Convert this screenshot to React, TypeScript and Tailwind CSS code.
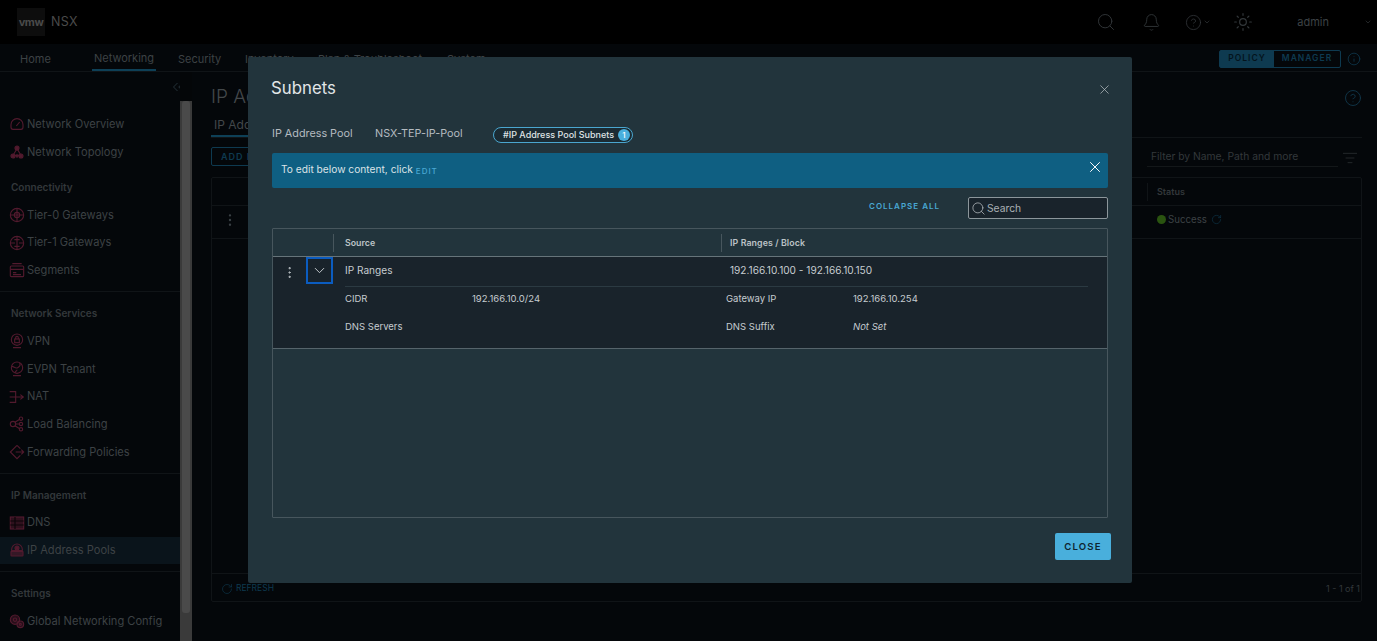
import React from "react";
import { Search, Bell, CircleHelp, Sun, ChevronDown, ChevronsLeft, EllipsisVertical, X, RotateCw, Info, ListFilter } from "lucide-react";

const font = "font-['Inter','Noto_Sans',sans-serif]";

function Ico({ children }: { children: React.ReactNode }) {
  return (
    <svg viewBox="0 0 24 24" fill="none" stroke="currentColor" strokeWidth="1.7" className="w-[16px] h-[16px] text-[#521a2e] shrink-0">
      {children}
    </svg>
  );
}

const icons: Record<string, React.ReactNode> = {
  overview: <><path d="M6 20h12a3 3 0 0 0 3-3v-4a9 9 0 0 0-18 0v4a3 3 0 0 0 3 3z" /><path d="M11 15l5-6" /></>,
  topology: <><path d="M12 7L6 17h12z" /><circle cx="12" cy="6" r="3" fill="currentColor" /><circle cx="6" cy="18" r="3" fill="currentColor" /><circle cx="18" cy="18" r="3" fill="currentColor" /><circle cx="12" cy="18" r="1.6" fill="currentColor" /></>,
  t0: <><circle cx="12" cy="12" r="10" /><path d="M2 12h20M12 2v20" /><circle cx="12" cy="12" r="4" /></>,
  t1: <><circle cx="12" cy="12" r="10" /><path d="M2 12h7M15 12h7M12 2v20" /><path d="M8 7h8M8 17h8" /></>,
  segments: <><rect x="2" y="6" width="20" height="16" rx="1.5" /><path d="M5 2.5h14M2 11h20M6 16h5M6 19h12" /></>,
  vpn: <><circle cx="12" cy="10" r="8.5" /><rect x="8.5" y="9" width="7" height="5.5" /><path d="M10 9V7a2 2 0 0 1 4 0v2M6 22h12" /></>,
  evpn: <><circle cx="12" cy="10" r="8.5" /><path d="M4 8c4 0 5 4 9 2s4-5 3-7M9 18c0-3 3-3 3-5M6 22h12" /></>,
  nat: <><path d="M1 4h9v16H1M1 12h20M17 8.5l4.5 3.5-4.5 3.5" /></>,
  lb: <><circle cx="6" cy="12" r="4" /><circle cx="18" cy="4" r="2.5" /><circle cx="18" cy="12" r="2.5" /><circle cx="18" cy="20" r="2.5" /><path d="M10 12h5.5M9 9.5l7-4.5M9 14.5l7 4.5" /></>,
  forward: <><path d="M12 2L2 12l10 10 5-5M17 7l-5-5" /><path d="M10 12h12M18.5 8.5l3.5 3.5-3.5 3.5" /></>,
  dns: <><rect x="2" y="3" width="20" height="18" fill="currentColor" fillOpacity="0.55" /><path d="M2 9h20M2 15h20M9 3v18" stroke="#0a0508" /></>,
  pools: <><path d="M4 11a8 8 0 0 1 16 0v2H4z" /><circle cx="12" cy="9" r="3" fill="currentColor" /><rect x="3" y="14" width="18" height="7" rx="1" fill="currentColor" fillOpacity="0.6" /></>,
  settings: <><circle cx="9" cy="10" r="7" fill="currentColor" fillOpacity="0.45" /><circle cx="9" cy="10" r="2.5" /><circle cx="17" cy="17" r="5" fill="currentColor" fillOpacity="0.45" /><circle cx="17" cy="17" r="1.5" /></>,
};

function NavItem({ k, label, active }: { k: string; label: string; active?: boolean }) {
  return (
    <div className={`h-[27.67px] flex items-center gap-[2px] pl-[9px] text-[11.1px] text-[#3d4245] ${active ? "bg-[#0a141b]" : ""}`}>
      <Ico>{icons[k]}</Ico>
      <span className="whitespace-nowrap">{label}</span>
    </div>
  );
}

function Heading({ label }: { label: string }) {
  return <div className="h-[35.3px] pt-[15px] pl-[11px] text-[10px] leading-[13px] font-semibold text-[#33383b]">{label}</div>;
}

function Divider() {
  return <div className="h-[8px] border-b border-[#101417]" />;
}

function Sidebar() {
  return (
    <div className="w-[192px] shrink-0 flex h-full">
      <div className="w-[180px] flex flex-col">
        <div className="h-[29px] flex justify-end items-center">
          <ChevronsLeft className="w-[18px] h-[18px] text-[#2f4048] mr-[-7px]" strokeWidth={1} />
        </div>
        <div className="h-[9.5px]" />
        <NavItem k="overview" label="Network Overview" />
        <NavItem k="topology" label="Network Topology" />
        <Heading label="Connectivity" />
        <NavItem k="t0" label="Tier-0 Gateways" />
        <NavItem k="t1" label="Tier-1 Gateways" />
        <NavItem k="segments" label="Segments" />
        <Divider />
        <Heading label="Network Services" />
        <NavItem k="vpn" label="VPN" />
        <NavItem k="evpn" label="EVPN Tenant" />
        <NavItem k="nat" label="NAT" />
        <NavItem k="lb" label="Load Balancing" />
        <NavItem k="forward" label="Forwarding Policies" />
        <Divider />
        <Heading label="IP Management" />
        <NavItem k="dns" label="DNS" />
        <NavItem k="pools" label="IP Address Pools" active />
        <Divider />
        <Heading label="Settings" />
        <NavItem k="settings" label="Global Networking Config" />
      </div>
      <div className="w-[12px] flex flex-col bg-[#040608] pt-[29px]">
        <div className="flex-1 bg-[#3a3a3a] flex justify-center">
          <div className="w-[8px] h-[512px] bg-[#4a4a4a] rounded-[3px]" />
        </div>
      </div>
    </div>
  );
}

function Main() {
  return (
    <div className="flex-1 min-w-0 pl-[19px] pr-[15px] flex flex-col h-[530px] text-[#3d4245]">
      <div className="h-[50px] flex items-center justify-between pt-[1px]">
        <span className="text-[19px] font-light text-[#43484b] whitespace-nowrap">IP Address Pools</span>
        <CircleHelp className="w-[18px] h-[18px] text-[#11384c]" strokeWidth={1.2} />
      </div>
      <div className="h-[16px] border-b border-[#101417] text-[12px]">
        <div className="w-[100px] h-[15px] border-b-2 border-[#0e4057] pl-[3px] leading-[5px] text-[#43484b] whitespace-nowrap">IP Address Pools</div>
      </div>
      <div className="h-[39px] flex items-center justify-between">
        <div className="w-[100px] h-[19px] mt-[-2px] border border-[#0e3a50] rounded-[2px] text-[9px] font-semibold tracking-[1px] text-[#0e3a50] pl-[9px] leading-[17px] whitespace-nowrap">ADD IP POOL</div>
        <div className="flex items-center">
          <div className="w-[191px] h-[19px] pl-[4px] pt-[1px] border-b border-[#131719] text-[10.3px] text-[#33383b] whitespace-nowrap">Filter by Name, Path and more</div>
          <ListFilter className="w-[16px] h-[16px] text-[#33383b] ml-[4px] mr-[4px]" strokeWidth={1} />
        </div>
      </div>
      <div className="flex-1 border border-[#101417] rounded-[2px] flex flex-col">
        <div className="h-[28px] border-b border-[#101417] flex justify-end items-center">
          <div className="w-[214px] pl-[9px] border-l border-[#101417] h-[18px] leading-[18px] text-[9px] font-semibold text-[#33383b]">Status</div>
        </div>
        <div className="h-[33px] border-b border-[#101417] flex items-center justify-between pb-[4px]">
          <EllipsisVertical className="ml-[10px] w-[16px] h-[16px] text-[#3a4145]" strokeWidth={1.6} />
          <div className="w-[204px] flex items-center text-[9.7px] gap-[2px]">
            <span className="w-[9px] h-[9px] rounded-full bg-[#2a5410]" />
            <span>Success</span>
            <RotateCw className="w-[11px] h-[11px] text-[#0e3a50] ml-[2px]" strokeWidth={1.3} />
          </div>
        </div>
        <div className="flex-1" />
        <div className="h-[28px] border-t border-[#101417] flex items-center justify-between pl-[9px] pr-[1px] pt-[2px]">
          <div className="flex items-center gap-[3px] text-[8.5px] text-[#0e3a50]"><RotateCw className="w-[12px] h-[12px]" strokeWidth={1.2} />REFRESH</div>
          <div className="text-[9px] text-[#33383b]">1 - 1 of 1</div>
        </div>
      </div>
    </div>
  );
}

function Modal() {
  return (
    <div className="absolute left-[248px] top-[57px] w-[884px] h-[526px] bg-[#22343c] rounded-[2px] px-[24px] flex flex-col text-[#c6ccd0]">
      <div className="h-[64px] flex items-center justify-between">
        <span className="text-[16.8px] text-[#e3e6e8] ml-[-1px]">Subnets</span>
        <X className="w-[15px] h-[15px] text-[#c0c6ca] mr-[-4px]" strokeWidth={1.1} />
      </div>
      <div className="h-[26px] pt-[1px] flex items-center text-[10.8px] text-[#b4bbc0]">
        <span className="w-[103px]">IP Address Pool</span>
        <span className="w-[118px]">NSX-TEP-IP-Pool</span>
        <div className="w-[140px] h-[16px] rounded-full border border-[#4aa6cf] bg-[#1b2b33] flex items-center justify-between pl-[9px] pr-[2px] text-[9px] font-medium text-[#dfe3e5]">
          <span className="whitespace-nowrap">#IP Address Pool Subnets</span>
          <span className="w-[12px] h-[12px] rounded-full bg-[#49afdc] text-white text-[8px] flex items-center justify-center">1</span>
        </div>
      </div>
      <div className="h-[35px] mt-[6px] bg-[#0f5f82] rounded-[2px] flex items-center justify-between pl-[9px] pr-[4px]">
        <div className="flex items-center text-[10.2px] text-[#dbe3e7] mt-[-1px]">
          To edit below content, click
          <span className="ml-[3px] text-[8px] font-medium tracking-[1px] text-[#49a8d4] mt-[2px]">EDIT</span>
        </div>
        <X className="w-[18px] h-[18px] text-white mt-[-7px]" strokeWidth={1.3} />
      </div>
      <div className="h-[40px] flex items-center justify-end">
        <span className="text-[8px] font-semibold tracking-[1px] text-[#49a8d4] mr-[28px] mt-[-4px]">COLLAPSE ALL</span>
        <div className="w-[140px] h-[22px] rounded-[2px] border border-[#8c969b] bg-[#19232b] flex items-center pl-[2px]">
          <Search className="w-[15px] h-[15px] text-[#b8bec2]" strokeWidth={1.2} />
          <span className="ml-[1px] mt-[1px] text-[10.3px] text-[#a9b0b4]">Search</span>
        </div>
      </div>
      <div className="h-[290px] border border-[#47565d] rounded-[1px] flex flex-col">
        <div className="h-[28px] border-b border-[#66747a] flex items-center text-[8.8px] font-semibold text-[#bcc3c7]">
          <div className="w-[61px] h-[18px] border-r border-[#47565d]" />
          <div className="w-[388px] h-[18px] leading-[18px] pl-[11px] border-r border-[#47565d]">Source</div>
          <div className="pl-[8px] tracking-[0.1px]">IP Ranges / Block</div>
        </div>
        <div className="h-[92px] bg-[#19232b] border-b border-[#56646b] flex flex-col text-[9.5px]">
          <div className="h-[30px] flex">
            <div className="w-[33px] flex items-center justify-center">
              <EllipsisVertical className="w-[15px] h-[15px] text-[#c0c6ca]" strokeWidth={1.6} />
            </div>
            <div className="w-[27px] h-[27px] border-2 border-[#0b5cc0] flex items-center justify-center">
              <ChevronDown className="w-[17px] h-[17px] text-[#c0c6ca]" strokeWidth={1.4} />
            </div>
            <div className="flex-1 ml-[12px] mr-[19px] border-b border-[#2b3a42] flex pb-[1px] items-center text-[10.1px]">
              <span className="w-[385px]">IP Ranges</span>
              <span>192.166.10.100 - 192.166.10.150</span>
            </div>
          </div>
          <div className="pl-[72px] mt-[-2px] h-[28px] grid grid-cols-[127px_254px_127px_1fr] items-center">
            <span>CIDR</span><span>192.166.10.0/24</span><span>Gateway IP</span><span>192.166.10.254</span>
          </div>
          <div className="pl-[72px] h-[28px] grid grid-cols-[381px_127px_1fr] items-center">
            <span>DNS Servers</span><span>DNS Suffix</span><span className="italic">Not Set</span>
          </div>
        </div>
      </div>
      <div className="flex justify-end mr-[-3px] mt-[15px]">
        <div className="w-[56px] h-[27px] pt-[1px] rounded-[2px] bg-[#49afdc] text-[#0e2530] text-[9.6px] font-semibold tracking-[1.2px] flex items-center justify-center">CLOSE</div>
      </div>
    </div>
  );
}

export default function App() {
  return (
    <div className={`relative w-[1377px] h-[641px] overflow-hidden bg-[#04070a] ${font}`}>
      <header className="h-[44px] bg-black flex items-center pl-[17px] text-[#3d4245]">
        <div className="w-[28px] h-[28px] bg-[#0d0d0d] flex items-center justify-center text-[11px] font-bold tracking-[-0.5px] text-[#4a4a4a]">vmw</div>
        <span className="ml-[6px] text-[12.5px] tracking-[0.3px] text-[#4a4a4a]">NSX</span>
        <div className="ml-auto flex items-center text-[#33383b]">
          <Search className="w-[20px] h-[20px]" strokeWidth={1.1} />
          <Bell className="ml-[26px] w-[19px] h-[19px]" strokeWidth={1.1} />
          <CircleHelp className="ml-[24px] w-[17px] h-[17px]" strokeWidth={1.1} />
          <ChevronDown className="ml-[1px] w-[8px] h-[8px]" />
          <Sun className="ml-[22px] w-[20px] h-[20px]" strokeWidth={1.4} />
          <span className="ml-[44px] text-[11px] text-[#3d4245]">admin</span>
          <ChevronDown className="ml-[35px] mr-[5px] w-[8px] h-[8px]" />
        </div>
      </header>
      <nav className="h-[28px] bg-[#04070a] border-b border-[#101417] flex items-center text-[11px] text-[#3d4245]">
        <div className="w-[92px] pl-[20px] pt-[3px]">Home</div>
        <div className="h-full w-[64px] mr-[22px] pt-[3px] border-b-2 border-[#0e4057] flex items-center justify-center">Networking</div>
        <div className="w-[67px] pt-[3px]">Security</div>
        <div className="w-[73px] pt-[3px]">Inventory</div>
        <div className="w-[129px] pt-[3px]">Plan &amp; Troubleshoot</div>
        <div className="pt-[3px]">System</div>
        <div className="ml-auto flex items-center pt-[2px]">
          <div className="w-[122px] h-[18px] border border-[#0e3a50] rounded-[2px] flex text-[8.5px] font-semibold tracking-[1px]">
            <div className="w-[54px] bg-[#0e3a50] text-[#04141c] flex items-center justify-center">POLICY</div>
            <div className="flex-1 text-[#0e3a50] flex items-center justify-center">MANAGER</div>
          </div>
          <Info className="ml-[6px] mr-[16px] w-[14px] h-[14px] text-[#0e3a50]" strokeWidth={1.3} />
        </div>
      </nav>
      <div className="flex h-[569px]">
        <Sidebar />
        <Main />
      </div>
      <Modal />
    </div>
  );
}
